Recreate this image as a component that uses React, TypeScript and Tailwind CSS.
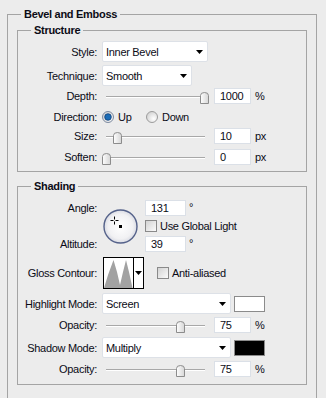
import React from "react";

// small black dropdown arrow
const Arrow = () => (
  <svg width="7" height="4" viewBox="0 0 7 4">
    <path d="M0 0H7L3.5 4Z" fill="#000" />
  </svg>
);

const Thumb = () => (
  <svg width="9" height="12" viewBox="0 0 9 12">
    <defs>
      <linearGradient id="thumbFill" x1="0" x2="1" y1="0" y2="0">
        <stop offset="0" stopColor="#fefefe" />
        <stop offset="1" stopColor="#d6d6d6" />
      </linearGradient>
    </defs>
    <path
      d="M0.5 3.5Q0.5 0.5 4.5 0.5Q8.5 0.5 8.5 3.5V11.5H0.5Z"
      fill="url(#thumbFill)"
      stroke="#8c8c8c"
    />
  </svg>
);

const Radio = ({ checked }: { checked?: boolean }) => (
  <svg width="12" height="12" viewBox="0 0 12 12">
    <defs>
      <radialGradient id="radioFill" cx="0.65" cy="0.65" r="0.7">
        <stop offset="0" stopColor="#ffffff" />
        <stop offset="1" stopColor="#d2d2d2" />
      </radialGradient>
    </defs>
    <circle cx="6" cy="6" r="5.5" fill="url(#radioFill)" stroke={checked ? "#7d8aa0" : "#9c9c9c"} />
    {checked && <circle cx="6" cy="6" r="3.3" fill="#1b6cb6" stroke="#0e3f78" strokeWidth="0.8" />}
  </svg>
);

const Checkbox = () => (
  <div className="h-[12px] w-[12px] shrink-0 border border-[#8a8a8a] bg-linear-to-br from-[#d3d3d3] to-[#fbfbfb]" />
);

function Row({ label, className, children }: { label: string; className: string; children: React.ReactNode }) {
  return (
    <div className={`flex items-center ${className}`}>
      <div className="w-[79px] shrink-0 text-right">{label}</div>
      {children}
    </div>
  );
}

function Select({ value, width }: { value: string; width: string }) {
  return (
    <div
      className={`ml-[5px] flex h-[21px] items-center justify-between rounded-[2px] border border-[#dde1e7] bg-white pl-[3px] pr-[4px] ${width}`}
    >
      <span>{value}</span>
      <Arrow />
    </div>
  );
}

function Slider({ pos }: { pos: number }) {
  return (
    <div className="relative ml-[9px] h-[16px] w-[99px]">
      <div className="absolute left-0 right-0 top-[8px] h-[2px] border-t border-[#a8a8a8] bg-white" />
      <div className="absolute top-[4px] flex" style={{ left: pos }}>
        <Thumb />
      </div>
    </div>
  );
}

function Field({ value, width = "w-[37px]", className = "" }: { value: string; width?: string; className?: string }) {
  return (
    <div className={`flex h-[16px] items-center border border-[#dbe0e7] bg-white pl-[5px] ${width} ${className}`}>
      {value}
    </div>
  );
}

function SliderRow({ label, pos, value, unit, className }: { label: string; pos: number; value: string; unit: string; className: string }) {
  return (
    <Row label={label} className={`h-[16px] ${className}`}>
      <Slider pos={pos} />
      <Field value={value} className="ml-[9px]" />
      <span className="ml-[4px]">{unit}</span>
    </Row>
  );
}

const AngleDial = () => (
  <svg width="35" height="35" viewBox="0 0 35 35">
    <defs>
      <radialGradient id="dialFill" cx="0.5" cy="0.5" r="0.5">
        <stop offset="0" stopColor="#ffffff" />
        <stop offset="0.75" stopColor="#f1f1f3" />
        <stop offset="1" stopColor="#d9dbe3" />
      </radialGradient>
    </defs>
    <circle cx="17.5" cy="17.5" r="16.5" fill="url(#dialFill)" stroke="#55628a" strokeWidth="1.4" />
    <path d="M11.5 7.5V10.5M11.5 12.5V15.5M7.5 11.5H10.5M12.5 11.5H15.5" stroke="#000" strokeWidth="1" />
    <rect x="16" y="16" width="3" height="3" fill="#000" />
  </svg>
);

const Contour = () => (
  <div className="ml-[6px] flex h-[32px] w-[41px] border border-black bg-white">
    <svg width="29" height="30" viewBox="0 0 29 30">
      <path d="M0 30L4 17L9.5 2L13 14L16 27L19 14L22 2L25 14L28.5 30Z" fill="#a2a2a2" />
    </svg>
    <div className="w-px bg-black" />
    <div className="flex flex-1 items-center justify-center">
      <Arrow />
    </div>
  </div>
);

export default function App() {
  return (
    <div className="h-[398px] w-[326px] overflow-hidden bg-[#ececec] pt-[8px] font-['Liberation_Sans',Arial,sans-serif] text-[11px] leading-[12px] tracking-[-0.3px] text-[#0b0b16]">
      <fieldset className="ml-[7px] w-[310px] min-w-0 border border-[#a4a4a4] pb-[40px]">
        <legend className="ml-[13px] px-[3px] font-bold">Bevel and Emboss</legend>

        {/* Structure */}
        <fieldset className="mx-[9px] mt-[4px] min-w-0 border border-[#a4a4a4] pb-[6px] pt-[5px]">
          <legend className="ml-[13px] px-[3px] font-bold">Structure</legend>
          <Row label="Style:" className="">
            <Select value="Inner Bevel" width="w-[106px]" />
          </Row>
          <Row label="Technique:" className="mt-[3px]">
            <Select value="Smooth" width="w-[90px]" />
          </Row>
          <SliderRow label="Depth:" pos={94} value="1000" unit="%" className="mt-[2px]" />
          <Row label="Direction:" className="mt-[5px] h-[16px]">
            <div className="ml-[5px] flex w-[44px] items-center">
              <Radio checked />
              <span className="ml-[4px]">Up</span>
            </div>
            <div className="flex items-center">
              <Radio />
              <span className="ml-[4px]">Down</span>
            </div>
          </Row>
          <SliderRow label="Size:" pos={7} value="10" unit="px" className="mt-[3px]" />
          <SliderRow label="Soften:" pos={-4} value="0" unit="px" className="mt-[5px]" />
        </fieldset>

        {/* Shading */}
        <fieldset className="mx-[9px] mt-[8px] min-w-0 border border-[#a4a4a4] pb-[7px] pt-[8px]">
          <legend className="ml-[13px] px-[3px] font-bold">Shading</legend>
          <div className="flex">
            <div className="w-[79px] shrink-0 text-right">
              <div className="flex h-[16px] items-center justify-end">Angle:</div>
              <div className="mt-[20px] flex h-[16px] items-center justify-end">Altitude:</div>
            </div>
            <div className="ml-[6px] mt-[9px] flex">
              <AngleDial />
            </div>
            <div className="ml-[7px]">
              <div className="flex h-[16px]">
                <Field value="131" width="w-[41px]" />
                <span className="ml-[3px] mt-[1px]">°</span>
              </div>
              <div className="mt-[4px] flex h-[12px] items-center">
                <Checkbox />
                <span className="ml-[3px]">Use Global Light</span>
              </div>
              <div className="mt-[4px] flex h-[16px]">
                <Field value="39" width="w-[41px]" />
                <span className="ml-[3px] mt-[1px]">°</span>
              </div>
            </div>
          </div>

          <Row label="Gloss Contour:" className="mt-[5px]">
            <Contour />
            <div className="ml-[13px] flex items-center">
              <Checkbox />
              <span className="ml-[3px]">Anti-aliased</span>
            </div>
          </Row>

          <Row label="Highlight Mode:" className="mt-[4px]">
            <Select value="Screen" width="w-[129px]" />
            <div className="ml-[3px] h-[16px] w-[31px] border border-[#8b8b8b] bg-white" />
          </Row>
          <SliderRow label="Opacity:" pos={70} value="75" unit="%" className="mt-[3px]" />
          <Row label="Shadow Mode:" className="mt-[4px]">
            <Select value="Multiply" width="w-[129px]" />
            <div className="ml-[3px] h-[16px] w-[31px] border border-[#8b8b8b] bg-black" />
          </Row>
          <SliderRow label="Opacity:" pos={70} value="75" unit="%" className="mt-[3px]" />
        </fieldset>
      </fieldset>
    </div>
  );
}
